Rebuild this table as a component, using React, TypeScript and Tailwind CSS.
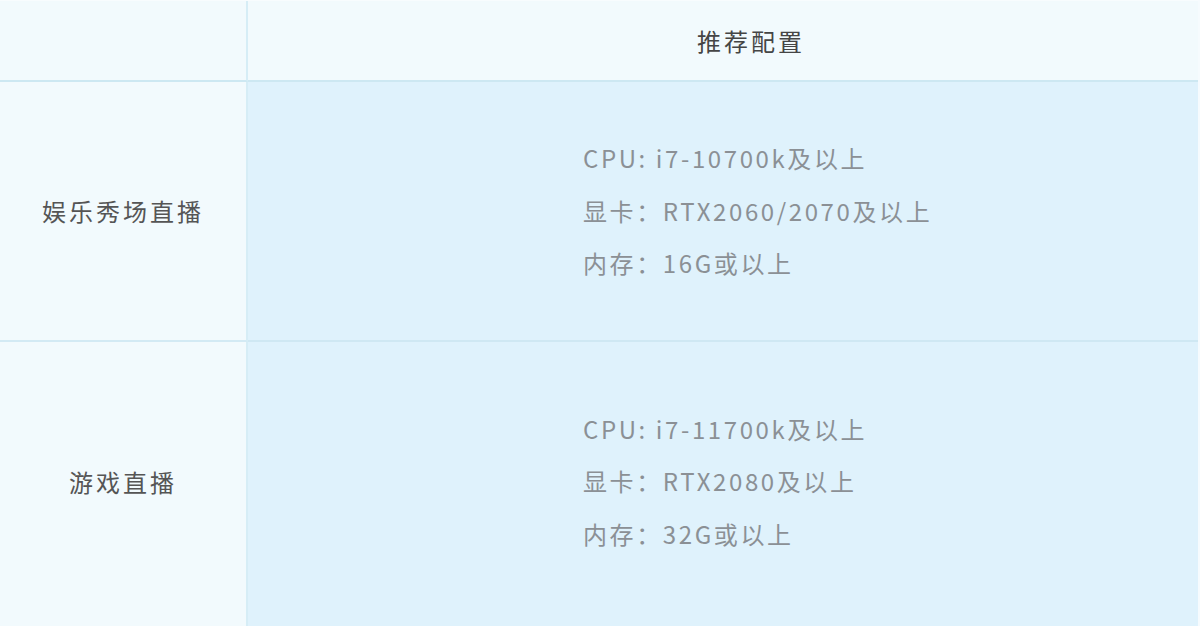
const rows = [
  {
    label: '娱乐秀场直播',
    specs: ['CPU: i7-10700k及以上', '显卡：RTX2060/2070及以上', '内存：16G或以上'],
    height: 'h-[260px]',
  },
  {
    label: '游戏直播',
    specs: ['CPU: i7-11700k及以上', '显卡：RTX2080及以上', '内存：32G或以上'],
    height: 'h-[286px] pb-[7px]',
  },
];

const App = () => {
  return (
    <div
      className="w-[1200px] h-[626px] overflow-hidden bg-[#f2fafd] border-t border-t-[#f8fcfe] border-r-2 border-r-[#f6fbfe] tracking-[3px] text-[24px]"
      style={{ fontFamily: '"Noto Sans CJK SC", "Noto Sans", sans-serif' }}
    >
      <div className="grid grid-cols-[248px_1fr]">
        {/* header */}
        <div className="h-[81px] border-r-2 border-r-[#d6edf6] border-b-2 border-b-[#cde8f2]" />
        <div className="h-[81px] flex items-center pl-[449px] text-[#454545] border-b-2 border-b-[#cde8f2]">
          推荐配置
        </div>

        {rows.map((row, i) => (
          <div key={i} className="contents">
            <div
              className={`${row.height} flex items-center justify-center text-[#555] border-r-2 border-r-[#d6edf6] ${
                i === 0 ? 'border-b-2 border-b-[#d3eaf4]' : ''
              }`}
            >
              {row.label}
            </div>
            <div
              className={`${row.height} flex items-center pl-[335px] bg-[#dff2fc] text-[#8b9095] ${
                i === 0 ? 'border-b-2 border-b-[#cfe8f3]' : ''
              }`}
            >
              <div className="flex flex-col leading-[52.5px] tracking-[2.6px]">
                {row.specs.map((spec) => (
                  <span key={spec}>{spec}</span>
                ))}
              </div>
            </div>
          </div>
        ))}
      </div>
    </div>
  );
};

export default App;
